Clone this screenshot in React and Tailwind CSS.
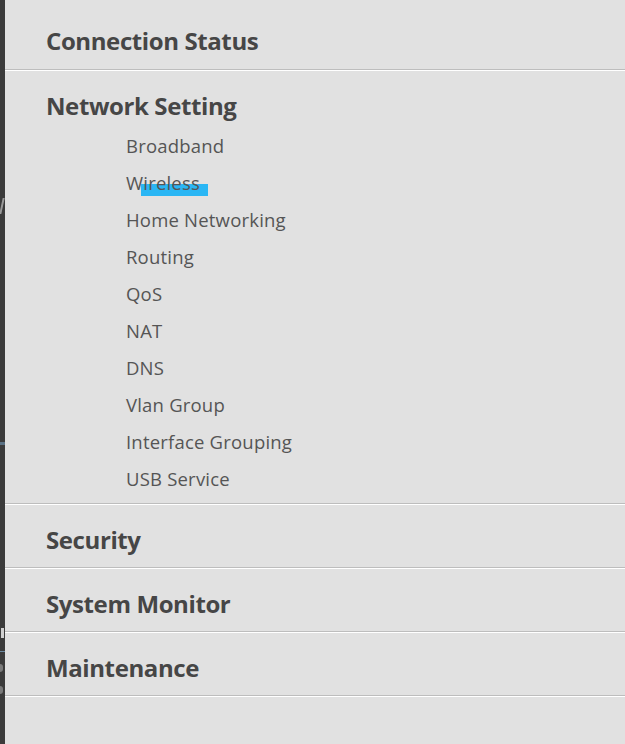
const subItems = [
  "Broadband",
  "Wireless",
  "Home Networking",
  "Routing",
  "QoS",
  "NAT",
  "DNS",
  "Vlan Group",
  "Interface Grouping",
  "USB Service",
];

const Separator = () => (
  <div>
    <div className="h-px bg-[#bdbdbd]" />
    <div className="h-px bg-white" />
  </div>
);

const Header = ({ children }) => (
  <div className="pl-[41px] text-[24px] leading-[24px] font-bold text-[#464646] tracking-[-0.4px]">
    {children}
  </div>
);

const Row = ({ label }) => (
  <div className="h-[62px] pt-[23px]">
    <Header>{label}</Header>
  </div>
);

export default function App() {
  return (
    <div
      className="flex w-[625px] h-[744px] overflow-hidden"
      style={{ fontFamily: '"Open Sans", "Liberation Sans", sans-serif' }}
    >
      {/* page behind the menu, only a sliver shows */}
      <div className="flex flex-col w-[5px] shrink-0 bg-[#3b3b3b]">
        <div className="mt-[198px] ml-[1px] w-[2px] h-[16px] bg-[#9a9a9a] -skew-x-12" />
        <div className="mt-[228px] w-[5px] h-[3px] bg-[#5a7184]" />
        <div className="mt-[183px] ml-[1px] w-[3px] h-[10px] bg-[#d0d0d0]" />
        <div className="mt-[13px] w-[5px] h-px bg-[#6d8aa0]" />
        <div className="mt-[12px] w-[3px] h-[8px] bg-[#7a7a7a] rounded-r-full" />
        <div className="mt-[14px] w-[3px] h-[8px] bg-[#7a7a7a] rounded-r-full" />
      </div>

      <div className="flex-1 bg-[#e1e1e1]">
        <div className="h-[69px] pt-[29px]">
          <Header>Connection Status</Header>
        </div>
        <Separator />

        <div className="h-[432px] pt-[23px]">
          <Header>Network Setting</Header>
          <ul className="mt-[9px] pl-[121px]">
            {subItems.map((item) => (
              <li
                key={item}
                className="relative text-[18.5px] leading-[37px] tracking-[0.2px] text-[#555555]"
              >
                {item === "Wireless" && (
                  <span className="absolute left-[15px] top-[20px] w-[67px] h-[12px] bg-[#2ab6f4]" />
                )}
                <span className="relative">{item}</span>
              </li>
            ))}
          </ul>
        </div>
        <Separator />

        <Row label="Security" />
        <Separator />
        <Row label="System Monitor" />
        <Separator />
        <Row label="Maintenance" />
        <Separator />
      </div>
    </div>
  );
}
